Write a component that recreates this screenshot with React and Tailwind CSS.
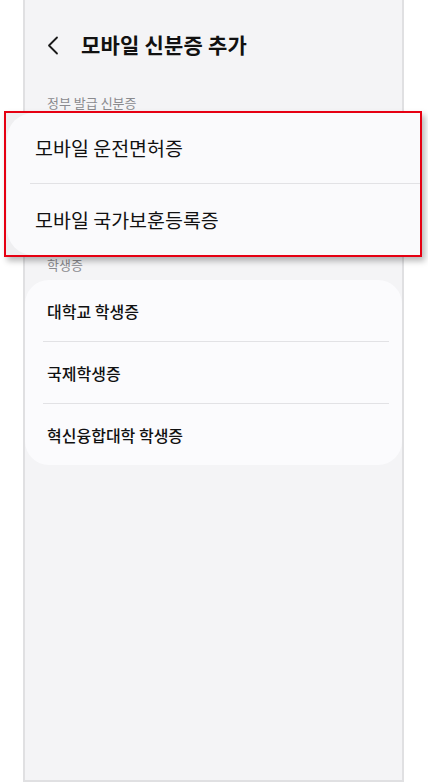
import React from 'react';

const font = { fontFamily: '"Noto Sans CJK KR", "Noto Sans", sans-serif' };

const govIds = ['모바일 운전면허증', '모바일 국가보훈등록증'];
const studentIds = ['대학교 학생증', '국제학생증', '혁신융합대학 학생증'];

const ListCard = ({ items }) => (
  <div className="rounded-[24px] bg-[#fbfbfd]">
    {items.map((label, i) => (
      <div key={label}>
        {i > 0 && <div className="ml-[18px] mr-[13px] h-px bg-[#e2e2e5]" />}
        <div className="flex h-[61px] items-center pl-[22px] text-[16px] font-medium text-[#111]">{label}</div>
      </div>
    ))}
  </div>
);

const App = () => {
  return (
    <div className="min-h-screen bg-white" style={font}>
      <div className="ml-[23px] h-[782px] w-[381px] border-x-2 border-b-2 border-[#e0e0e2] bg-[#f4f4f6]">
        {/* header */}
        <div className="flex h-[90px] items-center pl-[22px]">
          <svg width="12" height="19" viewBox="0 0 12 19" fill="none">
            <path d="M10 1.5 L2 9.5 L10 17.5" stroke="#1a1a1a" strokeWidth="1.8" strokeLinecap="round" strokeLinejoin="round" />
          </svg>
          <h1 className="ml-[22px] text-[21px] font-bold tracking-[0.2px] text-[#111]">모바일 신분증 추가</h1>
        </div>

        <div className="mt-[6px] pl-[22px] text-[13px] leading-[14px] text-[#8a8a8e]">정부 발급 신분증</div>

        {/* magnified government id card, highlighted */}
        <div className="relative z-10 -ml-[21px] mt-[1px] h-[146px] w-[418px] border-2 border-[#e60012] bg-[#efeff1] shadow-[3px_4px_6px_rgba(0,0,0,0.28)]">
          <div className="ml-[1px] h-full rounded-l-[26px] bg-[#fafafc]">
            <div className="flex h-[70px] items-center pl-[28px] text-[19.5px] text-[#111]">{govIds[0]}</div>
            <div className="ml-[23px] h-px bg-[#e2e2e5]" />
            <div className="flex h-[71px] items-center pl-[28px] text-[19.5px] text-[#111]">{govIds[1]}</div>
          </div>
        </div>

        <div className="mt-[1px] pl-[22px] text-[13px] leading-[14px] text-[#8a8a8e]">학생증</div>
        <div className="mt-[8px]">
          <ListCard items={studentIds} />
        </div>
      </div>
    </div>
  );
};

export default App;
